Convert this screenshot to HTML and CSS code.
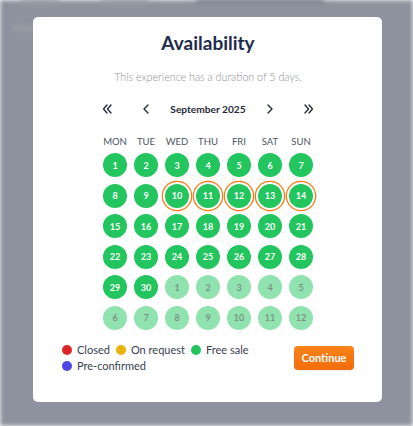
FILE: index.html
```html
<!DOCTYPE html>
<html>
<head>
<meta charset="utf-8">
<link rel="stylesheet" href="styles.css">
</head>
<body>
<div class="backdrop">
  <div class="bg-bar b1"></div>
  <div class="bg-bar b2"></div>
  <div class="bg-bar b3"></div>
  <div class="bg-bar b4"></div>
</div>
<div class="overlay">
  <div class="modal">
    <h1 class="title">Availability</h1>
    <p class="subtitle">This experience has a duration of 5 days.</p>
    <div class="nav">
      <span class="nav-btn first">
        <svg width="10" height="10" viewBox="0 0 10 10"><polyline points="5,1 1.5,5 5,9" fill="none" stroke="#1f2937" stroke-width="1.3" stroke-linecap="round" stroke-linejoin="round"/><polyline points="9,1 5.5,5 9,9" fill="none" stroke="#1f2937" stroke-width="1.3" stroke-linecap="round" stroke-linejoin="round"/></svg>
      </span>
      <span class="nav-btn prev">
        <svg width="10" height="10" viewBox="0 0 10 10"><polyline points="7,1 3,5 7,9" fill="none" stroke="#1f2937" stroke-width="1.4" stroke-linecap="round" stroke-linejoin="round"/></svg>
      </span>
      <span class="month">September 2025</span>
      <span class="nav-btn next">
        <svg width="10" height="10" viewBox="0 0 10 10"><polyline points="3,1 7,5 3,9" fill="none" stroke="#1f2937" stroke-width="1.4" stroke-linecap="round" stroke-linejoin="round"/></svg>
      </span>
      <span class="nav-btn last">
        <svg width="10" height="10" viewBox="0 0 10 10"><polyline points="1,1 4.5,5 1,9" fill="none" stroke="#1f2937" stroke-width="1.3" stroke-linecap="round" stroke-linejoin="round"/><polyline points="5,1 8.5,5 5,9" fill="none" stroke="#1f2937" stroke-width="1.3" stroke-linecap="round" stroke-linejoin="round"/></svg>
      </span>
    </div>
    <div class="weekdays">
      <div class="wd">MON</div><div class="wd">TUE</div><div class="wd">WED</div><div class="wd">THU</div><div class="wd">FRI</div><div class="wd">SAT</div><div class="wd">SUN</div>
    </div>
    <div class="grid">
      <div class="day">1</div><div class="day">2</div><div class="day">3</div><div class="day">4</div><div class="day">5</div><div class="day">6</div><div class="day">7</div>
      <div class="day">8</div><div class="day">9</div><div class="day sel">10</div><div class="day sel">11</div><div class="day sel">12</div><div class="day sel">13</div><div class="day sel">14</div>
      <div class="day">15</div><div class="day">16</div><div class="day">17</div><div class="day">18</div><div class="day">19</div><div class="day">20</div><div class="day">21</div>
      <div class="day">22</div><div class="day">23</div><div class="day">24</div><div class="day">25</div><div class="day">26</div><div class="day">27</div><div class="day">28</div>
      <div class="day">29</div><div class="day">30</div><div class="day out">1</div><div class="day out">2</div><div class="day out">3</div><div class="day out">4</div><div class="day out">5</div>
      <div class="day out">6</div><div class="day out">7</div><div class="day out">8</div><div class="day out">9</div><div class="day out">10</div><div class="day out">11</div><div class="day out">12</div>
    </div>
    <div class="footer">
      <div class="legend">
        <span class="item"><span class="dot red"></span>Closed</span>
        <span class="item"><span class="dot yellow"></span>On request</span>
        <span class="item"><span class="dot green"></span>Free sale</span>
        <span class="item"><span class="dot blue"></span>Pre-confirmed</span>
      </div>
      <button class="continue">Continue</button>
    </div>
  </div>
</div>
</body>
</html>
```

FILE: styles.css
```css
html, body {
  margin: 0;
  padding: 0;
  width: 413px;
  height: 426px;
  overflow: hidden;
  font-family: Lato, "Open Sans", sans-serif;
}

.backdrop {
  position: absolute;
  inset: 0;
  background: #8d929e;
  filter: blur(2px);
}

.bg-bar {
  position: absolute;
  background: #9a9fa9;
  height: 6px;
  border-radius: 3px;
}
.b1 { left: 20px; top: -2px; width: 40px; }
.b2 { left: 100px; top: -2px; width: 50px; }
.b3 { left: 195px; top: -2px; width: 130px; background: #858a96; }
.b4 { left: 12px; top: 26px; width: 22px; height: 5px; }

.overlay {
  position: absolute;
  inset: 0;
  display: flex;
  justify-content: center;
  align-items: flex-start;
  padding-top: 17px;
}

.modal {
  width: 349px;
  height: 385px;
  margin-left: 2px;
  background: #fff;
  border-radius: 5px;
  box-sizing: border-box;
  padding: 12px 28px 0 29px;
  display: flex;
  flex-direction: column;
  align-items: center;
}

.title {
  margin: 0;
  font-size: 19px;
  line-height: 28px;
  font-weight: 700;
  color: #1e2b4b;
}

.subtitle {
  margin: 12px 0 0;
  font-size: 10.7px;
  line-height: 16px;
  font-weight: 300;
  color: #8e8e93;
}

.nav {
  margin-top: 16px;
  display: flex;
  align-items: center;
  height: 16px;
}

.nav-btn {
  width: 12px;
  height: 12px;
  display: flex;
  align-items: center;
  justify-content: center;
}
.nav-btn.first { margin-right: 27px; }
.nav-btn.prev { margin-right: 18px; }
.nav-btn.next { margin-left: 18px; }
.nav-btn.last { margin-left: 27px; }

.month {
  font-size: 10.2px;
  font-weight: 700;
  color: #1f2937;
  line-height: 16px;
}

.weekdays {
  margin-top: 18px;
  display: grid;
  grid-template-columns: repeat(7, 24px);
  column-gap: 7px;
}

.wd {
  font-size: 9.5px;
  font-weight: 400;
  color: #4b5563;
  line-height: 14px;
  white-space: nowrap;
  display: flex;
  justify-content: center;
}

.grid {
  margin-top: 4px;
  display: grid;
  grid-template-columns: repeat(7, 24px);
  column-gap: 7px;
  row-gap: 6.6px;
}

.day {
  width: 24px;
  height: 24px;
  border-radius: 50%;
  background: #22c55e;
  color: #fff;
  font-size: 9px;
  font-weight: 700;
  display: flex;
  align-items: center;
  justify-content: center;
}

.day.sel {
  box-shadow: 0 0 0 2px #fff, 0 0 0 3.3px #f47a16;
}

.day.out {
  background: #90e2ae;
  color: #7e8a84;
  font-weight: 600;
}

.footer {
  align-self: stretch;
  margin-top: 12px;
  display: flex;
  justify-content: space-between;
  align-items: flex-start;
}

.legend {
  width: 220px;
  display: flex;
  flex-wrap: wrap;
  column-gap: 6px;
  row-gap: 0;
}

.item {
  display: flex;
  align-items: center;
  font-size: 11px;
  line-height: 16px;
  color: #374151;
}

.dot {
  width: 10px;
  height: 10px;
  border-radius: 50%;
  margin-right: 5px;
}
.dot.red { background: #dc2626; }
.dot.yellow { background: #eab308; }
.dot.green { background: #22c55e; }
.dot.blue { background: #4f46e5; }

.continue {
  margin-top: 4px;
  width: 60px;
  height: 24px;
  border: none;
  border-radius: 4px;
  background: linear-gradient(#f98319, #f26c0d);
  color: #fff;
  font-family: inherit;
  font-size: 11px;
  font-weight: 700;
  padding: 0;
  box-shadow: 0 1px 2px rgba(0,0,0,0.08);
}
```
